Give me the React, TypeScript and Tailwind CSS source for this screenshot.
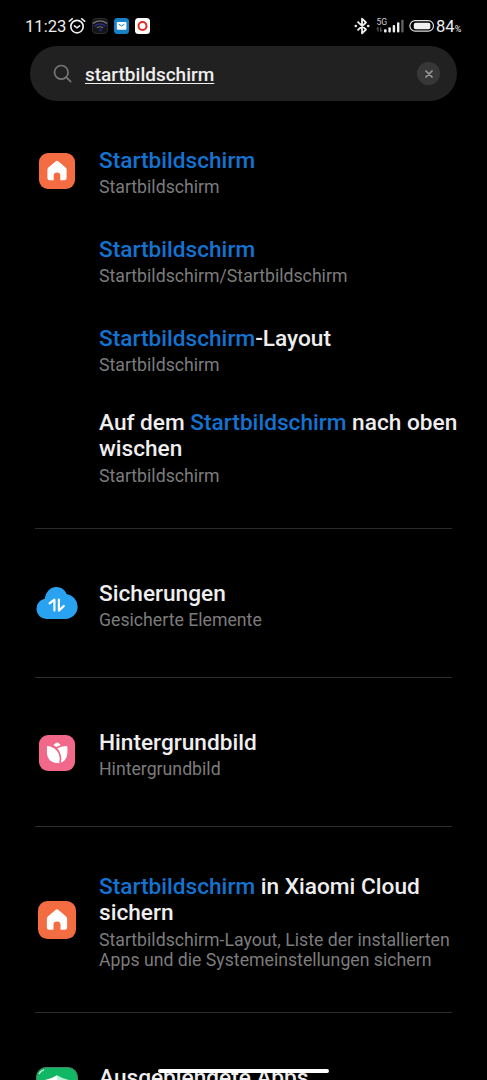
import type { ReactNode } from 'react';

interface ResultRowProps {
  title: ReactNode;
  subtitle?: ReactNode;
  icon?: ReactNode;
  className?: string;
}

function Match({ children }: { children: ReactNode }) {
  return <span className="text-[#1373d2]">{children}</span>;
}

function HomeIcon({ className }: { className: string }) {
  return (
    <svg viewBox="0 0 36 36" className={className}>
      <rect width="36" height="36" rx="9" fill="#f46c42" />
      <path
        d="M16.8 8.3Q18 7.2 19.2 8.3L26.6 14.6Q27.6 15.5 27.6 16.8V25Q27.6 27.2 25.4 27.2H21.3V22.5Q21.3 19.5 18 19.5Q14.7 19.5 14.7 22.5V27.2H10.6Q8.4 27.2 8.4 25V16.8Q8.4 15.5 9.4 14.6Z"
        fill="#fff"
      />
    </svg>
  );
}

function CloudIcon() {
  return (
    <svg viewBox="0 0 42 32" className="mb-[5px] h-8 w-[42px]">
      <path
        d="M10.2 32A10.2 10.2 0 0 1 8.7 11.8C9.8 4.6 14.5 0 20.3 0C25.2 0 29 2.8 30.8 7.3A12.4 12.4 0 0 1 29.4 32Z"
        fill="#2aa2f2"
      />
      <path
        d="M13.6 16.4L18.4 12.7V23.6M22.9 12.7V23.6L27.8 19"
        fill="none"
        stroke="#fff"
        strokeWidth="2.2"
        strokeLinecap="round"
        strokeLinejoin="round"
      />
    </svg>
  );
}

function TulipIcon() {
  return (
    <svg viewBox="0 0 36 36" className="mb-[3px] size-9">
      <rect width="36" height="36" rx="9" fill="#f2688a" />
      <path
        d="M7.9 12Q7.8 10.7 9 11Q17 12.6 19.8 19Q21.6 23.3 20.2 28.2C12.5 28.3 7.9 24.5 7.9 17Z"
        fill="#fff"
      />
      <path
        d="M18.3 13.3Q22 11.3 27.2 10.9Q28.4 10.8 28.4 12V17C28.4 22.5 26 26.2 21.8 27.8Q23.6 19.2 18.3 13.3Z"
        fill="#fff"
      />
      <path d="M14.3 10.2L16.8 8.1Q18.2 7 19.6 8.1L21.9 10.2Q19 11 17.3 12Q16 11 14.3 10.2Z" fill="#fff" />
    </svg>
  );
}

function ShieldIcon() {
  return (
    <svg viewBox="0 0 42 42" className="mb-[14px] size-[42px]">
      <rect x="0.5" y="0.5" width="41" height="41" rx="9.5" fill="#12b765" stroke="#4b8068" />
      <path d="M3 7Q4.5 3.8 8 2.7" fill="none" stroke="#d9ffe9" strokeWidth="1.2" />
      <path d="M21 8.2Q26 11.5 33 13V24Q33 33 21 37Z" fill="#b8f5d5" />
      <path d="M21 8.2Q16 11.5 9 13V24Q9 33 21 37Z" fill="#fff" />
    </svg>
  );
}

function StatusBar() {
  return (
    <div className="flex h-[46px] shrink-0 items-start justify-between pt-[17px] pr-[24px] pl-[25px]">
      <div className="flex h-[18px] items-center">
        <span className="w-[41px] pt-px text-[16.6px] leading-[18px] whitespace-nowrap text-[#eee]">11:23</span>
        {/* Alarm */}
        <svg
          viewBox="0 0 18 18"
          className="ml-[2px] size-[18px]"
          fill="none"
          stroke="#eee"
          strokeWidth="1.7"
          strokeLinecap="round"
        >
          <circle cx="9" cy="9.6" r="6.2" />
          <path d="M6.4 8.8L9 10.8L11.6 8.8M1.2 4.3L4.4 1.7M16.8 4.3L13.6 1.7" strokeWidth="1.5" />
        </svg>
        {/* Wifi app */}
        <svg viewBox="0 0 16 16" className="ml-[6px] size-4" fill="none" strokeLinecap="round">
          <rect x="0.5" y="0.5" width="15" height="15" rx="3.5" fill="#151518" stroke="#2c2c30" />
          <path d="M1.5 5.2Q8 0.5 14.5 5.2" stroke="#77777d" strokeWidth="1.4" />
          <path d="M3.2 7.8Q8 4.2 12.8 7.8" stroke="#292b83" strokeWidth="1.7" />
          <path d="M5.3 9.6Q8 7.8 10.7 9.6" stroke="#77777d" strokeWidth="1.1" />
          <circle cx="8.6" cy="12" r="1.4" fill="#22257d" />
        </svg>
        {/* Mail */}
        <svg viewBox="0 0 15 16" className="ml-[6px] h-4 w-[15px]">
          <rect width="15" height="16" rx="3.5" fill="#1680c9" />
          <rect x="2.8" y="4" width="9.6" height="7.7" rx="0.8" fill="#fff" />
          <path d="M4.7 6.1L7.6 8L10.5 6.1" fill="none" stroke="#1680c9" />
        </svg>
        {/* Opera */}
        <svg viewBox="0 0 15 16" className="ml-[6px] h-4 w-[15px]">
          <rect width="15" height="16" rx="3.5" fill="#fff" />
          <circle cx="7.5" cy="8" r="4" fill="none" stroke="#e12b26" strokeWidth="2" />
        </svg>
      </div>

      <div className="flex h-[18px] items-center">
        {/* Bluetooth */}
        <svg
          viewBox="0 0 16 18"
          className="h-[18px] w-4"
          fill="none"
          stroke="#eee"
          strokeWidth="1.8"
          strokeLinejoin="round"
        >
          <path d="M3.5 4.6L12 12.5L8 16.3V1.7L12 5.5L3.5 13.4" />
          <circle cx="1.8" cy="9" r="1.3" fill="#eee" stroke="none" />
          <circle cx="14.2" cy="9" r="1.3" fill="#eee" stroke="none" />
        </svg>
        {/* Mobile signal */}
        <svg viewBox="0 0 29 18" className="ml-[6px] h-[18px] w-[29px]" fill="#eee">
          <text x="0.5" y="8" fontSize="8.6" fill="#d0d0d0">
            5G
          </text>
          <path d="M2 10.5V14.5M0.6 11.9L2 10.5M4.7 10.5V14.5L6 13.1" fill="none" stroke="#777" strokeWidth="0.9" />
          <rect x="8" y="12.3" width="2.6" height="3.2" rx="1" />
          <rect x="12.4" y="10.3" width="2.4" height="5.2" rx="1" />
          <rect x="16.7" y="8" width="2.4" height="7.5" rx="1" />
          <rect x="21" y="5.3" width="2.4" height="10.2" rx="1" />
          <rect x="25.2" y="2.8" width="2.4" height="12.7" rx="0.8" fill="#606060" />
        </svg>
        {/* Battery */}
        <svg viewBox="0 0 26 12" className="ml-1 h-3 w-[26px]">
          <rect x="0.9" y="0.6" width="23.6" height="10.6" rx="5.3" fill="none" stroke="#ddd" strokeWidth="1.2" />
          <rect x="4.8" y="2.7" width="16.5" height="6.5" rx="1.8" fill="#f0f0f0" />
        </svg>
        <span className="ml-px flex w-[27px] items-baseline pt-[3px] text-[16.6px] leading-[18px] text-[#eee]">
          84<span className="text-[9px]">%</span>
        </span>
      </div>
    </div>
  );
}

function SearchBar() {
  return (
    <div className="mx-[30px] flex h-[55px] w-[427px] shrink-0 items-center rounded-full bg-[#212121] pr-[17px] pl-[23px]">
      <svg
        viewBox="0 0 20 20"
        className="size-5"
        fill="none"
        stroke="#777"
        strokeWidth="1.7"
        strokeLinecap="round"
      >
        <circle cx="8.3" cy="8.3" r="6.8" />
        <path d="M13.3 13.3L17.7 17.7" />
      </svg>
      <span className="ml-3 pt-[3px] text-[19px] leading-6 font-medium text-[#eee] underline decoration-1 underline-offset-2">
        startbildschirm
      </span>
      <button type="button" className="ml-auto flex size-[23px] items-center justify-center rounded-full bg-[#373737]">
        <svg viewBox="0 0 8 8" className="size-2" stroke="#9a9a9a" strokeWidth="1.7" strokeLinecap="round">
          <path d="M1 1L7 7M7 1L1 7" />
        </svg>
      </button>
    </div>
  );
}

function ResultRow({ title, subtitle, icon, className = '' }: ResultRowProps) {
  return (
    <div className={`flex ${className}`}>
      <div className="flex w-[99px] shrink-0 items-center justify-center pr-[15px] pl-[30px]">{icon}</div>
      <div className="whitespace-nowrap">
        <div className="text-[22.65px] leading-[26.3px] font-medium text-[#eee]">{title}</div>
        {subtitle && <div className="mt-[3px] text-[17.7px] leading-[20.5px] text-[#7c7c7c]">{subtitle}</div>}
      </div>
    </div>
  );
}

function Divider() {
  return <div className="mr-[35px] ml-[35px] h-px shrink-0 bg-[#2b2b2b]" />;
}

export default function App() {
  return (
    <div className="relative flex h-[1080px] w-[487px] flex-col overflow-hidden bg-black font-[Roboto,sans-serif]">
      <StatusBar />
      <SearchBar />

      <div className="flex h-[427px] shrink-0 flex-col pt-[47px]">
        <ResultRow
          className="h-[89px]"
          icon={<HomeIcon className="mb-[44px] size-9" />}
          title={<Match>Startbildschirm</Match>}
          subtitle="Startbildschirm"
        />
        <ResultRow
          className="h-[89px]"
          title={<Match>Startbildschirm</Match>}
          subtitle="Startbildschirm/Startbildschirm"
        />
        <ResultRow
          className="h-[84px]"
          title={
            <>
              <Match>Startbildschirm</Match>-Layout
            </>
          }
          subtitle="Startbildschirm"
        />
        <ResultRow
          title={
            <>
              Auf dem <Match>Startbildschirm</Match> nach oben
              <br />
              wischen
            </>
          }
          subtitle="Startbildschirm"
        />
      </div>
      <Divider />

      <div className="h-[148px] shrink-0 pt-[52px]">
        <ResultRow icon={<CloudIcon />} title="Sicherungen" subtitle="Gesicherte Elemente" />
      </div>
      <Divider />

      <div className="h-[148px] shrink-0 pt-[52px]">
        <ResultRow icon={<TulipIcon />} title="Hintergrundbild" subtitle="Hintergrundbild" />
      </div>
      <Divider />

      <div className="h-[185px] shrink-0 pt-[47px]">
        <ResultRow
          icon={<HomeIcon className="mb-[4px] size-[38px]" />}
          title={
            <>
              <Match>Startbildschirm</Match> in Xiaomi Cloud
              <br />
              sichern
            </>
          }
          subtitle={
            <>
              Startbildschirm-Layout, Liste der installierten
              <br />
              Apps und die Systemeinstellungen sichern
            </>
          }
        />
      </div>
      <Divider />

      <div className="shrink-0 pt-[52px]">
        <ResultRow className="h-[60px]" icon={<ShieldIcon />} title="Ausgeblendete Apps" />
      </div>

      {/* Gesture bar */}
      <div className="absolute bottom-[7px] left-[158px] h-1 w-[171px] rounded-full bg-white" />
    </div>
  );
}
